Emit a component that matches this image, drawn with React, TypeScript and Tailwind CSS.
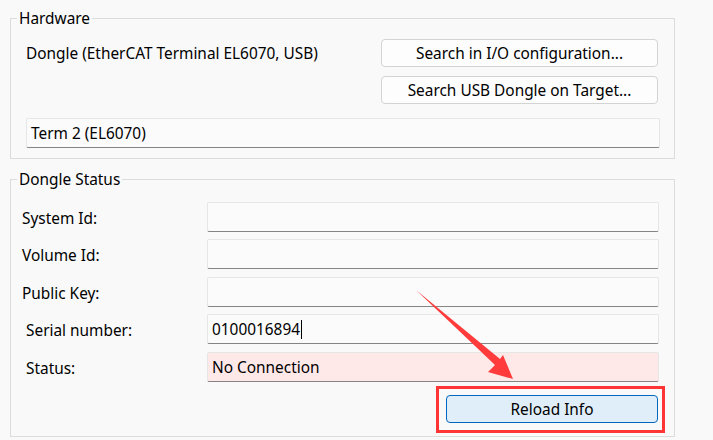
import React from "react";

const font = { fontFamily: '"Noto Sans", "Open Sans", sans-serif' };

function Field({
  label,
  value,
  labelPad,
  pink,
  caret,
  mt,
}: {
  label: string;
  value?: string;
  labelPad: string;
  pink?: boolean;
  caret?: boolean;
  mt: string;
}) {
  return (
    <div className={`flex items-center ${mt}`}>
      <div className={`w-[196px] ${labelPad} pt-[3px] text-[15.4px] leading-none text-black`}>{label}</div>
      <div
        className={`h-[30px] w-[452px] flex items-center pl-[4px] pt-[1px] rounded-[2px] border border-[#e6e6e6] border-b-[#858585] text-[15.4px] text-black ${
          pink ? "bg-[#ffe8e8]" : "bg-[#fbfbfb]"
        }`}
      >
        {value}
        {caret && <span className="inline-block w-px h-[19px] bg-black ml-[1px]" />}
      </div>
    </div>
  );
}

export default function App() {
  return (
    <div className="relative w-[713px] h-[440px] bg-[#f9f9f9] overflow-hidden" style={font}>
      <div className="pt-[10px] pl-[10px] w-[675px]">
        <fieldset className="border border-[#dcdcdc] h-[149px] px-0">
          <legend className="ml-[6px] px-[2px] text-[15.4px] leading-[17px] text-black">Hardware</legend>
          <div className="flex pl-[15px] pt-[12px]">
            <div className="flex-1 pt-[7px] text-[15.4px] leading-none text-black">Dongle (EtherCAT Terminal EL6070, USB)</div>
            <div className="flex flex-col gap-[9px] mr-[16px]">
              <button className="w-[277px] h-[28px] pt-[2px] rounded-[4px] border border-[#d3d3d3] bg-[#fdfdfd] text-[15.4px] text-black leading-none">
                Search in I/O configuration...
              </button>
              <button className="w-[277px] h-[28px] pt-[2px] rounded-[4px] border border-[#d3d3d3] bg-[#fdfdfd] text-[15.4px] text-black leading-none">
                Search USB Dongle on Target...
              </button>
            </div>
          </div>
          <div className="ml-[15px] mt-[14px] w-[634px] h-[30px] flex items-center pl-[4px] pt-[1px] rounded-[2px] border border-[#e6e6e6] border-b-[#858585] bg-[#fbfbfb] text-[15.4px] text-black">
            Term 2 (EL6070)
          </div>
        </fieldset>

        <fieldset className="mt-[12px] border border-[#dcdcdc] h-[266px] px-0">
          <legend className="ml-[6px] px-[2px] text-[15.4px] leading-[17px] text-black">Dongle Status</legend>
          <div className="pl-0 pt-[14px]">
            <Field label="System Id:" labelPad="pl-[11px]" mt="mt-0" />
            <Field label="Volume Id:" labelPad="pl-[11px]" mt="mt-[7px]" />
            <Field label="Public Key:" labelPad="pl-[11px]" mt="mt-[8px]" />
            <Field label="Serial number:" labelPad="pl-[15px]" value="0100016894" caret mt="mt-[7px]" />
            <Field label="Status:" labelPad="pl-[15px]" value="No Connection" pink mt="mt-[8px]" />
            <div className="flex justify-end pr-[16px] mt-[13px]">
              <button className="w-[212px] h-[28px] pt-[2px] rounded-[4px] border border-[#0067c0] bg-[#e0eef9] text-[15.4px] text-black leading-none">
                Reload Info
              </button>
            </div>
          </div>
        </fieldset>
      </div>

      {/* annotation: red box */}
      <div className="absolute left-[436px] top-[386px] w-[229px] h-[47px] border-[3px] border-[#ff3535]" />
      {/* annotation: arrow */}
      <svg className="absolute left-0 top-0" width="713" height="440" viewBox="0 0 713 440">
        <polygon
          points="416,290 500,359 503,355 513,379 488,372 495,365"
          fill="#ff3b3b"
        />
      </svg>
    </div>
  );
}
